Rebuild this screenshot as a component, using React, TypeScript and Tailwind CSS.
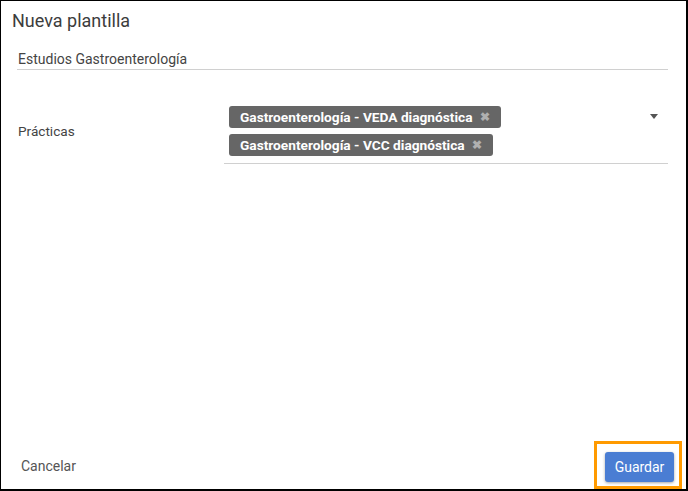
function Chip({ label }: { label: string }) {
  return (
    <div className="inline-flex items-center h-[22px] rounded-[3px] bg-[#666666] pl-[11px] pr-[11px] text-[13.7px] font-bold text-white">
      <span>{label}</span>
      <span className="ml-[7px] text-[12px] text-[#b0b0b0]">✖</span>
    </div>
  );
}

export default function App() {
  return (
    <div
      className="w-[688px] h-[491px] flex flex-col bg-white border-t border-l border-r-2 border-b-2 border-black"
      style={{ fontFamily: "Roboto, 'Noto Sans', sans-serif" }}
    >
      <h1 className="pl-[11px] pt-[8px] text-[18px] leading-[24px] text-[#3c3c3c]">
        Nueva plantilla
      </h1>

      <div className="mt-[17px] ml-[16px] mr-[18px] border-b border-[#d0d0d0] pl-[1px] pb-[1px] text-[14px] leading-[18px] text-[#444444]">
        Estudios Gastroenterología
      </div>

      <div className="mt-[31px] ml-[16px] mr-[18px] flex items-center">
        <div className="w-[207px] pl-[1px] pb-[2px] text-[13.6px] text-[#444444]">Prácticas</div>
        <div className="flex-1 relative border-b border-[#d0d0d0] pt-[5px] pb-[7px] pl-[5px] flex flex-col items-start gap-[6px]">
          <Chip label="Gastroenterología - VEDA diagnóstica" />
          <Chip label="Gastroenterología - VCC diagnóstica" />
          <svg
            className="absolute right-[10px] top-[13px]"
            width="8"
            height="5"
            viewBox="0 0 8 5"
          >
            <path d="M0 0 L8 0 L4 5 Z" fill="#555" />
          </svg>
        </div>
      </div>

      <div className="mt-auto flex items-center justify-between pl-[20px] pr-[4px]">
        <span className="text-[14px] text-[#555555] pt-[2px]">Cancelar</span>
        <div className="border-[3px] border-[#ff9a00] pt-[8px] pb-[4px] pl-[8px] pr-[5px]">
          <button className="h-[30px] w-[69px] rounded-[3px] bg-[#4a7dd3] text-[14px] font-normal text-white shadow-[0_1px_3px_rgba(0,0,0,0.35)]">
            Guardar
          </button>
        </div>
      </div>
    </div>
  );
}
